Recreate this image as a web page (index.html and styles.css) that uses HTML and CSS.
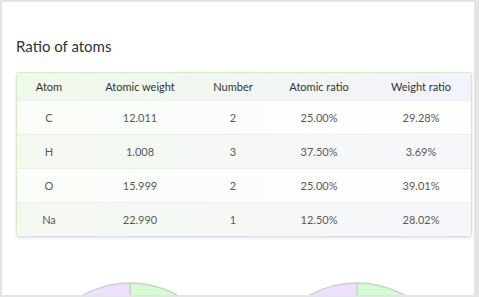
FILE: index.html
```html
<!DOCTYPE html>
<html>
<head>
<meta charset="utf-8">
<link rel="stylesheet" href="styles.css">
</head>
<body>
<div class="card">
  <h2 class="title">Ratio of atoms</h2>
  <table class="atoms">
    <colgroup>
      <col class="c1"><col class="c2"><col class="c3"><col class="c4"><col class="c5">
    </colgroup>
    <thead>
      <tr><th>Atom</th><th>Atomic weight</th><th>Number</th><th>Atomic ratio</th><th>Weight ratio</th></tr>
    </thead>
    <tbody>
      <tr><td>C</td><td>12.011</td><td>2</td><td>25.00%</td><td>29.28%</td></tr>
      <tr class="alt"><td>H</td><td>1.008</td><td>3</td><td>37.50%</td><td>3.69%</td></tr>
      <tr><td>O</td><td>15.999</td><td>2</td><td>25.00%</td><td>39.01%</td></tr>
      <tr class="alt"><td>Na</td><td>22.990</td><td>1</td><td>12.50%</td><td>28.02%</td></tr>
    </tbody>
  </table>
  <div class="charts">
    <div class="chart">
      <svg class="pie" viewBox="-100 -100 200 200" width="198" height="198">
        <path d="M0 0 L0 -98 A98 98 0 0 1 98 0 Z" fill="#d6fbd2" stroke="#cfcfcf" stroke-width="1.5"/>
        <path d="M0 0 L98 0 A98 98 0 0 1 -69.3 69.3 Z" fill="#fde7d2" stroke="#cfcfcf" stroke-width="1.5"/>
        <path d="M0 0 L-69.3 69.3 A98 98 0 0 1 -69.3 -69.3 Z" fill="#d7ecfb" stroke="#cfcfcf" stroke-width="1.5"/>
        <path d="M0 0 L-69.3 -69.3 A98 98 0 0 1 0 -98 Z" fill="#ede1fd" stroke="#cfcfcf" stroke-width="1.5"/>
      </svg>
    </div>
    <div class="chart">
      <svg class="pie" viewBox="-100 -100 200 200" width="198" height="198">
        <path d="M0 0 L0 -98 A98 98 0 0 1 94.3 26.6 Z" fill="#d6fbd2" stroke="#cfcfcf" stroke-width="1.5"/>
        <path d="M0 0 L94.3 26.6 A98 98 0 0 1 87.6 44.0 Z" fill="#fde7d2" stroke="#cfcfcf" stroke-width="1.5"/>
        <path d="M0 0 L87.6 44.0 A98 98 0 0 1 -96.2 -18.6 Z" fill="#d7ecfb" stroke="#cfcfcf" stroke-width="1.5"/>
        <path d="M0 0 L-96.2 -18.6 A98 98 0 0 1 0 -98 Z" fill="#ede1fd" stroke="#cfcfcf" stroke-width="1.5"/>
      </svg>
    </div>
  </div>
</div>
</body>
</html>
```
FILE: styles.css
```css
html, body {
  margin: 0;
  padding: 0;
  height: 100%;
  overflow: hidden;
}
body {
  background: #e4e4e4;
  font-family: "Lato", "Open Sans", sans-serif;
  padding: 2px 5px 0 2px;
  box-sizing: border-box;
}
.card {
  background: #ffffff;
  height: 293px;
  overflow: hidden;
  padding: 35px 4px 0 14px;
  box-sizing: border-box;
}
.title {
  margin: 0 0 17px 0;
  font-size: 15px;
  font-weight: 400;
  color: #333;
  line-height: 18px;
}
.atoms {
  width: 454px;
  border-collapse: separate;
  border-spacing: 0;
  table-layout: fixed;
  border: 1px solid #dcdcef;
  border-top-color: #d3ecc5;
  border-left-color: #d3ecc5;
  border-radius: 3px;
  box-shadow: 0 1px 3px rgba(0, 0, 0, 0.12);
  font-size: 11px;
  text-align: center;
}
.c1 { width: 64px; }
.c2 { width: 118px; }
.c3 { width: 68px; }
.c4 { width: 104px; }
.c5 { width: 100px; }
.atoms thead tr {
  background: linear-gradient(90deg, #eff9e8, #f3f3fc);
}
.atoms th {
  height: 27px;
  padding: 0;
  font-weight: 400;
  color: #333;
  border-bottom: 1px solid #f0f0f0;
}
.atoms td {
  height: 33px;
  padding: 0;
  color: #5a5a5a;
  border-bottom: 1px solid #eeeeee;
}
.atoms tbody tr {
  background: linear-gradient(90deg, #fbfdf9, #fdfdfe);
}
.atoms tbody tr.alt {
  background: linear-gradient(90deg, #f4f9f0, #f6f6fb);
}
.atoms tbody tr:last-child td {
  border-bottom: none;
}
.charts {
  display: grid;
  grid-template-columns: 1fr 1fr;
  width: 454px;
  margin-top: 44px;
}
.chart {
  display: flex;
  justify-content: center;
}
.pie {
  display: block;
}
```
